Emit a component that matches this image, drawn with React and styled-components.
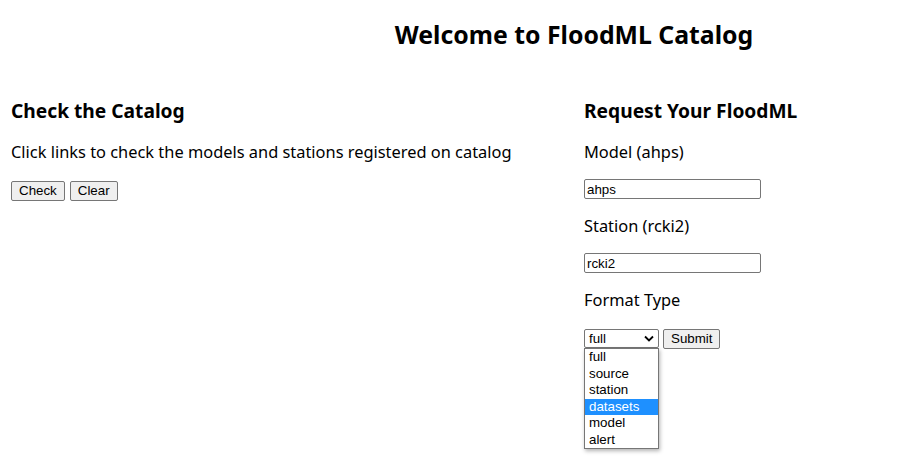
import React from 'react';
import styled, { createGlobalStyle } from 'styled-components';

const Global = createGlobalStyle`
  html, body { margin: 0; padding: 0; background: #fff; }
  body { font-family: "Noto Sans", "Open Sans", sans-serif; color: #000; }
  * { box-sizing: border-box; }
`;

const Page = styled.div`
  padding: 0 11px;
  min-height: 468px;
`;

const Header = styled.header`
  display: flex;
  justify-content: center;
  padding: 17px 0 0 230px;
`;

const Title = styled.h1`
  margin: 0;
  font-size: 24.8px;
  line-height: 34px;
  font-weight: 700;
`;

const Columns = styled.main`
  display: grid;
  grid-template-columns: 573px 1fr;
  margin-top: 47px;
`;

const Column = styled.section`
  display: flex;
  flex-direction: column;
  align-items: flex-start;
`;

const Heading = styled.h2`
  margin: 0;
  font-size: 19.2px;
  line-height: 26px;
  font-weight: 700;
`;

const Text = styled.p`
  margin: ${p => p.$top || 16}px 0 0;
  font-size: 16.4px;
  line-height: 24px;
`;

const Row = styled.div`
  display: flex;
  align-items: flex-start;
  gap: ${p => p.$gap || 5}px;
  margin-top: ${p => p.$top || 17}px;
`;

const Button = styled.button`
  font-family: "Liberation Sans", Arial, sans-serif;
  font-size: 13.33px;
  height: 20px;
  padding: 0 7px;
  background: #efefef;
  border: 1px solid #767676;
  border-radius: 2px;
  color: #000;
  line-height: 18px;
`;

const Input = styled.input`
  font-family: "Liberation Sans", Arial, sans-serif;
  font-size: 13.33px;
  width: 177px;
  height: 20px;
  margin-top: 15px;
  padding: 1px 2px;
  border: 1px solid #767676;
  border-radius: 2px;
  color: #000;
  outline: none;
`;

const SelectWrap = styled.div`
  position: relative;
  width: 75px;
`;

const SelectBox = styled.div`
  width: 75px;
  height: 19px;
  border: 1px solid #767676;
  border-radius: 2px;
  display: flex;
  align-items: center;
  justify-content: space-between;
  padding: 0 4px;
  font-family: "Liberation Sans", Arial, sans-serif;
  font-size: 13.33px;
  background: #fff;
`;

const Chevron = styled.svg`
  width: 10px;
  height: 7px;
`;

const ListBox = styled.ul`
  position: absolute;
  left: 0;
  top: 19px;
  width: 75px;
  margin: 0;
  padding: 0;
  list-style: none;
  border: 1px solid #767676;
  background: #fff;
  box-shadow: 1px 2px 4px rgba(0, 0, 0, 0.3);
  z-index: 2;
`;

const Option = styled.li`
  height: 16.5px;
  line-height: 16.5px;
  padding: 0 4px;
  font-family: "Liberation Sans", Arial, sans-serif;
  font-size: 13.33px;
  color: ${p => (p.$active ? '#fff' : '#000')};
  background: ${p => (p.$active ? '#1e90ff' : 'transparent')};
`;

const options = ['full', 'source', 'station', 'datasets', 'model', 'alert'];

export default function App() {
  return (
    <Page>
      <Global />
      <Header>
        <Title>Welcome to FloodML Catalog</Title>
      </Header>
      <Columns>
        <Column>
          <Heading>Check the Catalog</Heading>
          <Text>Click links to check the models and stations registered on catalog</Text>
          <Row $gap={5}>
            <Button>Check</Button>
            <Button>Clear</Button>
          </Row>
        </Column>
        <Column>
          <Heading>Request Your FloodML</Heading>
          <Text>Model (ahps)</Text>
          <Input defaultValue="ahps" />
          <Text $top={15}>Station (rcki2)</Text>
          <Input defaultValue="rcki2" />
          <Text $top={15}>Format Type</Text>
          <Row $gap={4} $top={17}>
            <SelectWrap>
              <SelectBox>
                <span>full</span>
                <Chevron viewBox="0 0 10 7">
                  <path d="M1 1.5 L5 5.5 L9 1.5" fill="none" stroke="#000" strokeWidth="1.8" />
                </Chevron>
              </SelectBox>
              <ListBox role="listbox">
                {options.map(o => (
                  <Option key={o} role="option" $active={o === 'datasets'}>{o}</Option>
                ))}
              </ListBox>
            </SelectWrap>
            <Button>Submit</Button>
          </Row>
        </Column>
      </Columns>
    </Page>
  );
}
